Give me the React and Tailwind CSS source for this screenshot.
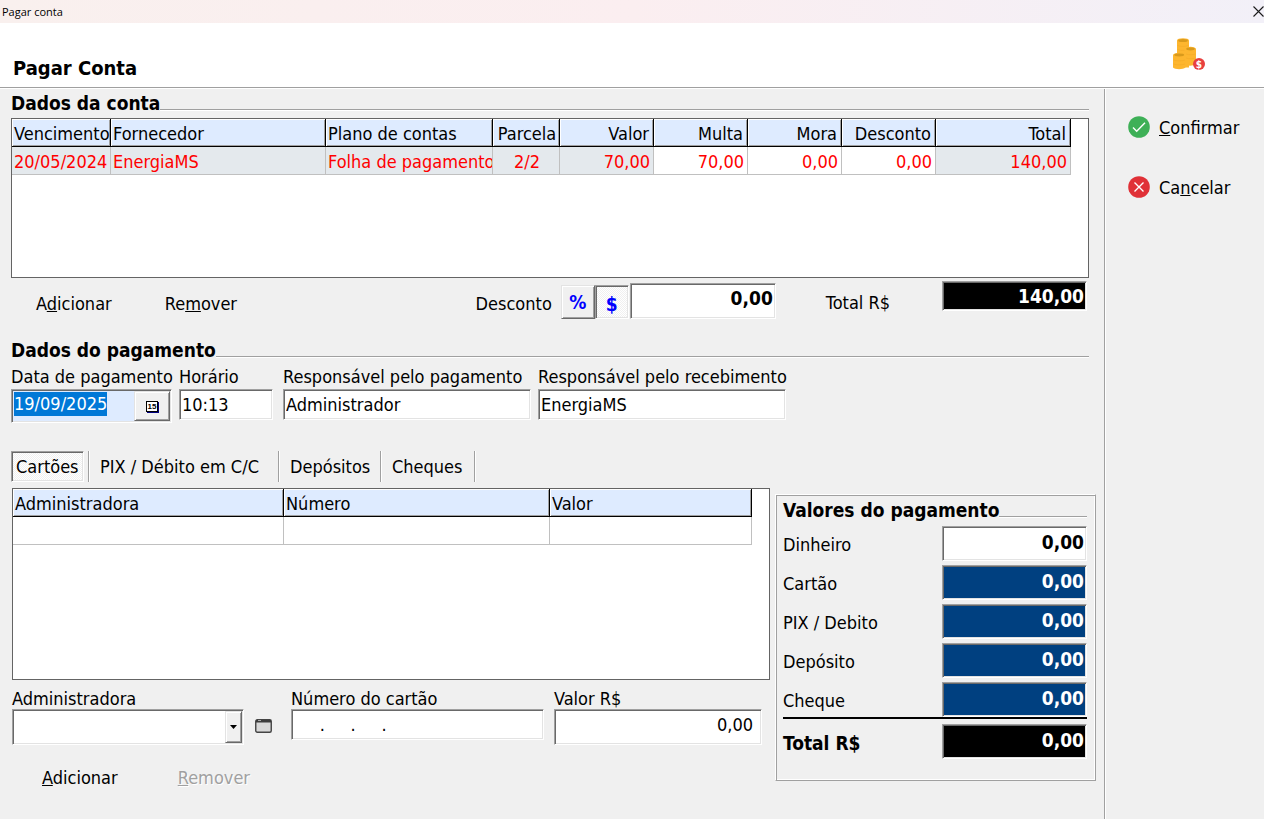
import { useEffect, useRef, useState } from 'react';

const sunken = 'border border-t-[#a0a0a0] border-l-[#a0a0a0] border-r-white border-b-white shadow-[inset_1px_1px_0_#696969,inset_-1px_-1px_0_#e3e3e3]';
const raised = 'bg-[#f0f0f0] border border-t-[#e3e3e3] border-l-[#e3e3e3] border-r-[#696969] border-b-[#696969] shadow-[inset_1px_1px_0_#fff,inset_-1px_-1px_0_#a0a0a0]';
const dither = 'bg-[repeating-conic-gradient(#ffffff_0_25%,#f0f0f0_0_50%)] bg-[length:2px_2px]';
const inp = `${sunken} min-w-0 outline-none px-[2px] bg-white`;
const bold = 'font-bold text-[19px]';

const bills = [
  { due: '20/05/2024', supplier: 'EnergiaMS', plan: 'Folha de pagamento', part: '2/2', value: '70,00', fine: '70,00', late: '0,00', discount: '0,00', total: '140,00' },
];

const billCols = [
  { key: 'due', label: 'Vencimento', w: 'w-[99px]', align: 'text-left', shaded: true },
  { key: 'supplier', label: 'Fornecedor', w: '', align: 'text-left', shaded: true },
  { key: 'plan', label: 'Plano de contas', w: 'w-[167px]', align: 'text-left', shaded: true },
  { key: 'part', label: 'Parcela', w: 'w-[67px]', align: 'text-center', shaded: true },
  { key: 'value', label: 'Valor', w: 'w-[94px]', align: 'text-right', shaded: true },
  { key: 'fine', label: 'Multa', w: 'w-[94px]', align: 'text-right', shaded: false },
  { key: 'late', label: 'Mora', w: 'w-[94px]', align: 'text-right', shaded: false },
  { key: 'discount', label: 'Desconto', w: 'w-[94px]', align: 'text-right', shaded: false },
  { key: 'total', label: 'Total', w: 'w-[135px]', align: 'text-right', shaded: true },
];

const cardCols = [
  { key: 'admin', label: 'Administradora', w: '', align: 'text-left' },
  { key: 'number', label: 'Número', w: 'w-[266px]', align: 'text-left' },
  { key: 'value', label: 'Valor', w: 'w-[202px]', align: 'text-left' },
];

const tabs = [
  { label: 'Cartões', w: 'w-[73px]' },
  { label: 'PIX / Débito em C/C', w: 'w-[188px]' },
  { label: 'Depósitos', w: 'w-[100px]' },
  { label: 'Cheques', w: 'w-[92px]' },
];

function Heading({ children }) {
  return (
    <div className="flex h-6">
      <h2 className={`${bold} leading-[25px] whitespace-nowrap`}>{children}</h2>
      <div className="flex-1 mt-[18px] h-[2px] bg-white border-t border-[#a0a0a0]" />
    </div>
  );
}

function Grid({ cols, rows, className }) {
  return (
    <div className={`bg-white border border-[#646464] ${className}`}>
      <table className="w-[calc(100%-17px)] table-fixed border-separate border-spacing-0">
        <thead>
          <tr>
            {cols.map(c => (
              <th key={c.key} className={`${c.w} ${c.align} h-7 p-0 pt-[2px] pl-[2px] ${c.align === 'text-right' ? 'pr-1' : ''} font-normal bg-[#deebff] border-r border-b border-black overflow-hidden whitespace-nowrap shadow-[inset_1px_1px_0_#fff,inset_-1px_-1px_0_#a0a0a0]`}>{c.label}</th>
            ))}
          </tr>
        </thead>
        <tbody>
          {rows.map((r, i) => (
            <tr key={i}>
              {cols.map(c => (
                <td key={c.key} className={`${c.align} ${c.shaded ? 'bg-[#e4e9ed]' : 'bg-white'} h-7 p-0 pt-[2px] pl-[2px] ${c.align === 'text-right' ? 'pr-[3px]' : ''} text-[#ff0000] border-r border-b border-[#c0c0c0] overflow-hidden whitespace-nowrap`}>{r[c.key]}</td>
              ))}
            </tr>
          ))}
        </tbody>
      </table>
    </div>
  );
}

function Field({ id, label, width, leading = 'leading-6', children }) {
  return (
    <div className={`flex flex-col ${width}`}>
      <label htmlFor={id} className={`${leading} whitespace-nowrap`}>{label}</label>
      {children}
    </div>
  );
}

function Amount({ id, label, value, tone = 'bg-[#004080] text-white', strong, readOnly = true }) {
  return (
    <div className="flex items-center justify-between h-[35px]">
      <label htmlFor={id} className={`pt-[2px] ${strong ? bold : ''}`}>{label}</label>
      <input id={id} readOnly={readOnly} defaultValue={value} className={`${sunken} ${tone} ${bold} w-[145px] h-full pr-[2px] pb-1 text-right outline-none`} />
    </div>
  );
}

function CoinsIcon() {
  return (
    <svg width="34" height="34" viewBox="0 0 34 34" aria-hidden="true">
      <path d="M5 3.500v27h12V3.500z" fill="#fdb62f" />
      <path d="M13 12v15.500c2 1.500 8 1.500 11 0V12z" fill="#fdb62f" />
      <path d="M1 18v12.500c2 2.300 10 2.300 12.500 0V18z" fill="#fdb62f" />
      <ellipse cx="11" cy="3.500" rx="6" ry="2.300" fill="#fdb62f" />
      <ellipse cx="11" cy="3.500" rx="4.800" ry="1.500" fill="#d99a1c" />
      <ellipse cx="18.500" cy="12" rx="5.500" ry="2.200" fill="#fdb62f" />
      <ellipse cx="18.500" cy="12" rx="4.300" ry="1.400" fill="#d99a1c" />
      <ellipse cx="7.200" cy="18" rx="6.200" ry="2.200" fill="#fdb62f" />
      <ellipse cx="7.200" cy="18" rx="5" ry="1.400" fill="#d99a1c" />
      <path d="M5.500 8.500c3 1.200 7 1.200 11 0M5.500 12.500c2 .8 4 1 7 .7M14 17c3 1 6 1 9.500 0M14 21c3 1 6 1 9.500 0M1.500 23c3 1.200 8 1.200 11.500 0M1.500 27c3 1.200 8 1.200 11.500 0" fill="none" stroke="#f3aa26" strokeWidth=".6" />
      <circle cx="27" cy="27" r="6" fill="#e8403f" />
      <text x="27" y="30.500" textAnchor="middle" fontSize="10" fontWeight="bold" fill="#fff">$</text>
    </svg>
  );
}

export default function App() {
  const [tab, setTab] = useState(0);
  const [mode, setMode] = useState('$');
  const dateRef = useRef(null);

  useEffect(() => { dateRef.current.focus(); dateRef.current.select(); }, []);

  return (
    <div className="min-h-screen flex flex-col bg-[#f0f0f0] text-black text-[18px] leading-6 font-['DejaVu_Sans_Condensed','Noto_Sans',sans-serif]">
      <div className="flex items-center justify-between h-[23px] pl-[2px] bg-linear-to-r from-[#f9f0ee] via-[#fbeef0] to-[#f2f0f8]">
        <span className="text-[11px] leading-4 font-['Open_Sans',sans-serif]">Pagar conta</span>
        <button aria-label="Fechar" className="w-[11px] h-[11px]">
          <svg width="11" height="11" viewBox="0 0 11 11"><path d="M.5.5l10 10M10.500.5l-10 10" stroke="#1a1a1a" strokeWidth="1.100" /></svg>
        </button>
      </div>

      <header className="flex justify-between h-[66px] pl-[13px] pr-[58px] bg-white border-b border-white shadow-[inset_0_-1px_0_#a0a0a0]">
        <h1 className="font-bold text-[20px] pt-[33px]">Pagar Conta</h1>
        <div className="pt-[14px]"><CoinsIcon /></div>
      </header>

      <div className="flex flex-1">
        <main className="flex-1 min-w-0 pl-[11px] pr-2 pt-[2px]">
          <section className="mr-[7px]">
            <Heading>Dados da conta</Heading>
            <Grid cols={billCols} rows={bills} className="mt-[3px] h-[160px]" />
            <div className="flex items-end justify-between h-[38px] mt-[3px] pr-[2px]">
              <div className="flex gap-[53px] pl-[25px] leading-[30px]">
                <button>A<u>d</u>icionar</button>
                <button>Re<u>m</u>over</button>
              </div>
              <div className="flex items-end h-full">
                <label htmlFor="discount" className="leading-[30px] mr-[9px]">Desconto</label>
                {['%', '$'].map(m => (
                  <button key={m} onClick={() => setMode(m)} className={`${mode === m ? `${sunken} ${dither} pt-1` : raised} ${bold} w-[34px] h-[34px] text-[#0000ff]`}>{m}</button>
                ))}
                <input id="discount" defaultValue="0,00" className={`${inp} ${bold} w-[146px] h-9 ml-px pb-[6px] text-right`} />
                <label htmlFor="total" className="leading-8 ml-[50px] mr-[52px]">Total R$</label>
                <input id="total" readOnly defaultValue="140,00" className={`${sunken} ${bold} self-start w-[145px] h-[30px] pr-[2px] text-right bg-black text-white outline-none`} />
              </div>
            </div>
          </section>

          <section className="mt-[19px] mr-[7px]">
            <Heading>Dados do pagamento</Heading>
            <div className="flex mt-[3px] h-[58px]">
              <Field id="date" label="Data de pagamento" width="w-[168px]">
                <div className={`${sunken} flex w-[161px] h-[34px] p-px bg-[#deebff]`}>
                  <input id="date" ref={dateRef} defaultValue="19/09/2025" className="flex-1 min-w-0 pl-px pb-1 outline-none selection:bg-[#0078d7] selection:text-white" />
                  <button aria-label="Calendário" className={`${raised} w-9 flex items-center justify-center`}>
                    <span className="w-3 h-[11px] bg-white border border-black shadow-[1px_1px_0_#000080] text-[8px] leading-[9px] text-center font-bold font-['Liberation_Sans',sans-serif]">15</span>
                  </button>
                </div>
              </Field>
              <Field id="time" label="Horário" width="w-[104px]">
                <input id="time" defaultValue="10:13" className={`${inp} w-[94px] h-[31px]`} />
              </Field>
              <Field id="payer" label="Responsável pelo pagamento" width="w-[255px]">
                <input id="payer" defaultValue="Administrador" className={`${inp} w-[248px] h-[31px]`} />
              </Field>
              <Field id="receiver" label="Responsável pelo recebimento" width="w-[255px]">
                <input id="receiver" defaultValue="EnergiaMS" className={`${inp} w-[248px] h-[31px]`} />
              </Field>
            </div>
          </section>

          <div className="flex gap-[5px] mt-7">
            <section className="flex-1 min-w-0">
              <div className="flex h-[31px]">
                {tabs.map((t, i) => (
                  <div key={t.label} className="flex">
                    <button onClick={() => setTab(i)} className={`${t.w} ${tab === i ? `${sunken} ${dither} pl-1 mr-1` : 'pl-[10px]'} text-left whitespace-nowrap`}>{t.label}</button>
                    <div className="w-[2px] bg-white border-l border-[#a0a0a0]" />
                  </div>
                ))}
              </div>
              <Grid cols={cardCols} rows={[{}]} className="mt-[6px] ml-px h-[192px]" />

              <div className="flex mt-[9px] ml-px h-14">
                <Field id="card-admin" label="Administradora" width="w-[232px]" leading="leading-5">
                  <div className={`${sunken} relative h-9 bg-white`}>
                    <select id="card-admin" className="appearance-none w-full h-full px-[3px] outline-none"><option></option></select>
                    <span className={`${raised} absolute top-px right-px bottom-px w-[17px] flex items-center justify-center pointer-events-none`}>
                      <svg width="7" height="4" viewBox="0 0 7 4"><path d="M0 0h7L3.500 4z" /></svg>
                    </span>
                  </div>
                </Field>
                <button aria-label="Abrir administradoras" className="mx-[11px] pt-[17px]">
                  <svg width="17" height="14" viewBox="0 0 17 14">
                    <rect x=".75" y=".75" width="15.500" height="12.500" rx="1.500" fill="#d8d8d8" stroke="#444" strokeWidth="1.400" />
                    <path d="M1 1h15v2.500H1z" fill="#3c3c3c" />
                    <path d="M3 1.500h3" stroke="#aaa" />
                  </svg>
                </button>
                <Field id="card-number" label="Número do cartão" width="w-[271px] pl-2" leading="leading-5">
                  <input id="card-number" defaultValue="     .     .     ." className={`${inp} w-[253px] h-[31px] whitespace-pre`} />
                </Field>
                <Field id="card-value" label="Valor R$" width="w-[208px]" leading="leading-5">
                  <input id="card-value" defaultValue="0,00" className={`${inp} h-9 pr-2 pb-[6px] text-right`} />
                </Field>
              </div>
              <div className="flex gap-[60px] mt-5 pl-[31px] leading-[26px]">
                <button><u>A</u>dicionar</button>
                <button disabled className="text-[#a0a0a0] [text-shadow:1px_1px_0_#fff]"><u>R</u>emover</button>
              </div>
            </section>

            <section className="w-[321px] h-[287px] mt-[43px] pl-[7px] pr-2 pt-[3px] border border-t-white border-l-white border-r-[#a0a0a0] border-b-[#a0a0a0] shadow-[inset_1px_1px_0_#a0a0a0,inset_-1px_-1px_0_#fff]">
              <Heading>Valores do pagamento</Heading>
              <div className="flex flex-col gap-1 mt-1">
                <Amount id="cash" label="Dinheiro" value="0,00" tone="bg-white text-black" readOnly={false} />
                <Amount id="card" label="Cartão" value="0,00" />
                <Amount id="pix" label="PIX / Debito" value="0,00" />
                <Amount id="deposit" label="Depósito" value="0,00" />
                <Amount id="check" label="Cheque" value="0,00" />
              </div>
              <div className="h-[2px] mb-[5px] bg-black" />
              <Amount id="sum" label="Total R$" value="0,00" tone="bg-black text-white" strong />
            </section>
          </div>
        </main>

        <aside className="w-[160px] shrink-0 flex flex-col gap-[34px] pl-[23px] pt-[25px] border-l border-[#a0a0a0] shadow-[inset_1px_0_0_#fff]">
          <button className="flex items-center gap-[9px]">
            <svg width="22" height="22" viewBox="0 0 22 22">
              <circle cx="11" cy="11" r="10.800" fill="#3eb057" />
              <path d="M5 11.500l3.700 3.700L17 6.800" fill="none" stroke="#fff" strokeWidth="1.400" />
            </svg>
            <span className="pt-[2px]"><u>C</u>onfirmar</span>
          </button>
          <button className="flex items-center gap-[9px]">
            <svg width="22" height="22" viewBox="0 0 22 22">
              <circle cx="11" cy="11" r="10.800" fill="#e03137" />
              <path d="M6.500 6.500l9 9M15.500 6.500l-9 9" fill="none" stroke="#fff" strokeWidth="1.400" />
            </svg>
            <span className="pt-[2px]">Ca<u>n</u>celar</span>
          </button>
        </aside>
      </div>
    </div>
  );
}
